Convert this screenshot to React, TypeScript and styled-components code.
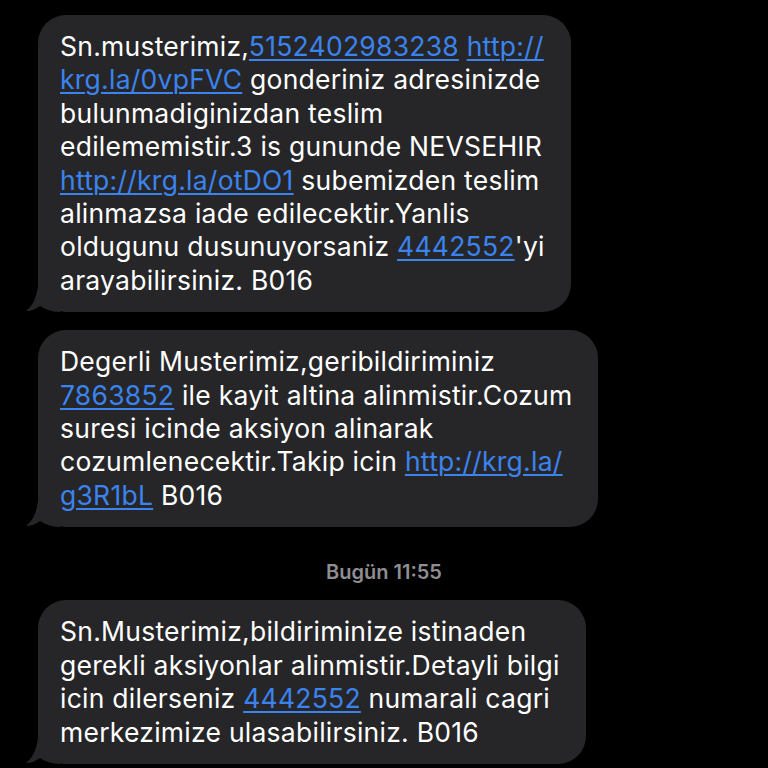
import React from "react";
import styled, { createGlobalStyle } from "styled-components";

const Global = createGlobalStyle`
  html, body { margin: 0; padding: 0; background: #000; }
  body { font-family: Inter, "Noto Sans", sans-serif; -webkit-font-smoothing: antialiased; }
`;

const Screen = styled.div`
  width: 768px;
  height: 768px;
  overflow: hidden;
  background: #000;
  display: flex;
  flex-direction: column;
  padding: 15px 0 0 38px;
  box-sizing: border-box;
`;

const Bubble = styled.div<{ $mt?: number }>`
  position: relative;
  align-self: flex-start;
  margin-top: ${(p) => p.$mt ?? 0}px;
  background: #262628;
  border-radius: 28px;
  padding: 15px 26px 15px 22px;
  color: #fff;
  font-size: 26.5px;
  letter-spacing: 0.25px;
  line-height: 33.4px;
  white-space: nowrap;
`;

const Tail = styled.svg`
  position: absolute;
  left: -12px;
  bottom: 0;
  width: 40px;
  height: 26px;
`;

const Link = styled.span`
  color: #3b83ee;
  text-decoration: underline;
  text-decoration-thickness: 1.5px;
  text-underline-offset: 3px;
`;

const Stamp = styled.div`
  align-self: center;
  margin: 34px 0 0 -38px;
  color: #8e8e93;
  font-size: 20px;
  font-weight: 600;
  line-height: 22px;
`;

const BubbleTail = () => (
  <Tail viewBox="0 0 40 26">
    <path d="M12 0 L34 0 L34 26 C28 26 20 24 14 20 C10 23 5 25 0 25 C6 20 10 14 12 0 Z" fill="#262628" />
  </Tail>
);

export default function App() {
  return (
    <>
      <Global />
      <Screen>
        <Bubble>
          Sn.musterimiz,<Link>5152402983238</Link> <Link>http://</Link>
          <br />
          <Link>krg.la/0vpFVC</Link> gonderiniz adresinizde
          <br />
          bulunmadiginizdan teslim
          <br />
          edilememistir.3 is gununde NEVSEHIR
          <br />
          <Link>http://krg.la/otDO1</Link> subemizden teslim
          <br />
          alinmazsa iade edilecektir.Yanlis
          <br />
          oldugunu dusunuyorsaniz <Link>4442552</Link>'yi
          <br />
          arayabilirsiniz. B016
          <BubbleTail />
        </Bubble>
        <Bubble $mt={18}>
          Degerli Musterimiz,geribildiriminiz
          <br />
          <Link>7863852</Link> ile kayit altina alinmistir.Cozum
          <br />
          suresi icinde aksiyon alinarak
          <br />
          cozumlenecektir.Takip icin <Link>http://krg.la/</Link>
          <br />
          <Link>g3R1bL</Link> B016
          <BubbleTail />
        </Bubble>
        <Stamp>Bugün 11:55</Stamp>
        <Bubble $mt={17}>
          Sn.Musterimiz,bildiriminize istinaden
          <br />
          gerekli aksiyonlar alinmistir.Detayli bilgi
          <br />
          icin dilerseniz <Link>4442552</Link> numarali cagri
          <br />
          merkezimize ulasabilirsiniz. B016
          <BubbleTail />
        </Bubble>
      </Screen>
    </>
  );
}
